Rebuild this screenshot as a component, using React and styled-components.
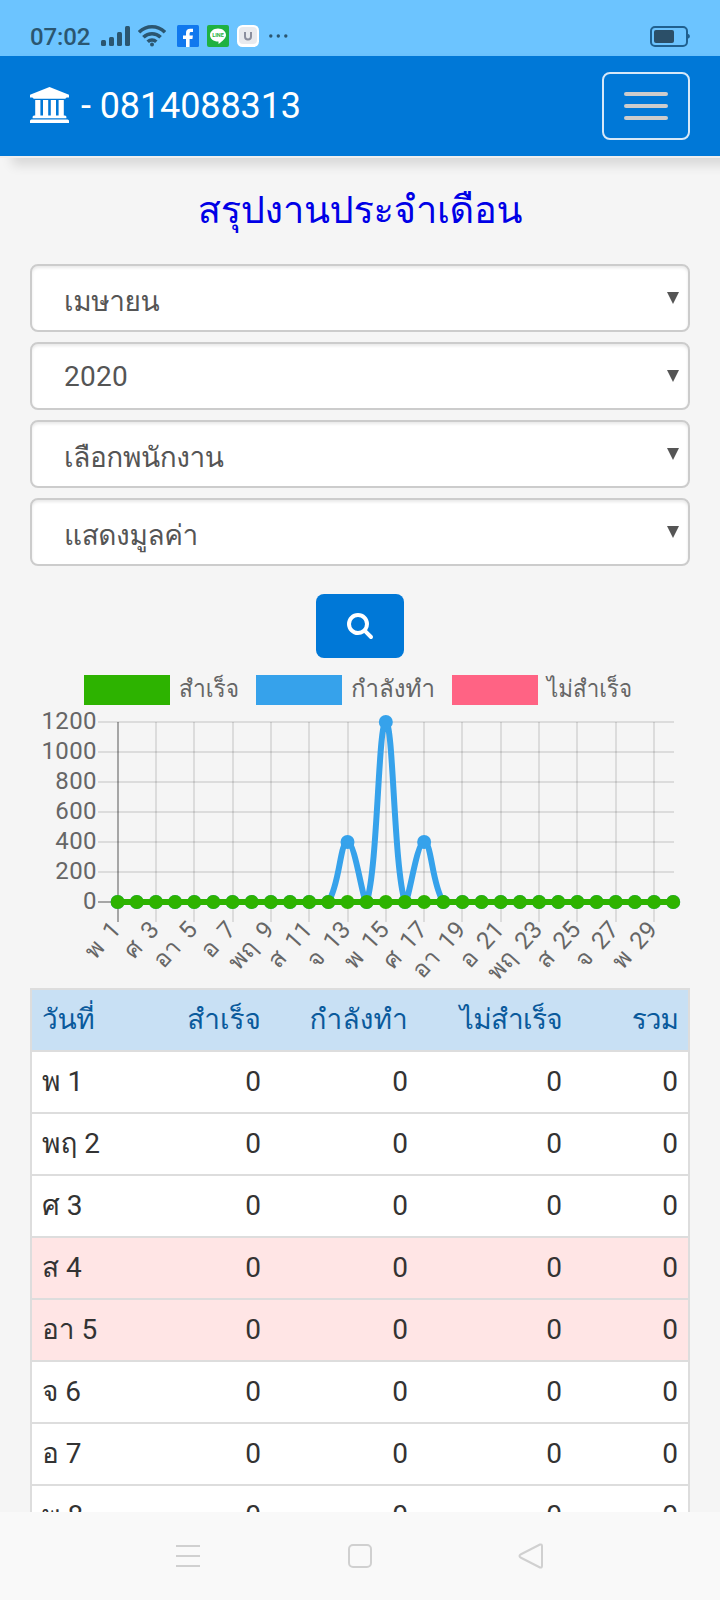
import React from 'react';
import styled, { createGlobalStyle } from 'styled-components';

const GlobalStyle = createGlobalStyle`
  * {
    box-sizing: border-box;
  }

  body {
    margin: 0;
    background: #f5f5f5;
    font-family: Roboto, Loma, 'Noto Sans Thai Looped', sans-serif;
  }
`;

const Screen = styled.div`
  display: flex;
  flex-direction: column;
  width: 720px;
  height: 1600px;
  overflow: hidden;
  background: #f5f5f5;
`;

const StatusBar = styled.header`
  display: flex;
  align-items: center;
  flex-shrink: 0;
  height: 56px;
  padding: 16px 30px 0;
  background: #6cc4ff;
  color: #2b5670;

  svg {
    display: block;
    flex-shrink: 0;
  }
`;

const Clock = styled.span`
  width: 71px;
  padding-top: 2px;
  font-size: 24px;
  font-weight: 500;
  letter-spacing: -0.1px;
  line-height: 40px;
  white-space: nowrap;
`;

const AppIcons = styled.div`
  display: flex;
  gap: 8px;
  margin: 0 auto 0 11px;
`;

const Navbar = styled.nav`
  display: flex;
  align-items: center;
  justify-content: space-between;
  flex-shrink: 0;
  height: 102px;
  padding: 0 30px;
  border-bottom: 2px solid #efefef;
  background: #0078d7;
  background-clip: padding-box;
  box-shadow: 12px 7px 11px rgba(0, 0, 0, 0.12);
`;

const Brand = styled.div`
  display: flex;
  align-items: center;
  gap: 12px;
  color: #fff;
  font-size: 36px;
  letter-spacing: -0.1px;
  line-height: 40px;
  white-space: nowrap;

  svg {
    margin-bottom: 2px;
  }
`;

const MenuButton = styled.button`
  display: flex;
  flex-direction: column;
  align-items: center;
  justify-content: center;
  gap: 8px;
  width: 88px;
  height: 68px;
  padding: 0;
  border: 2px solid #d6e8f8;
  border-radius: 8px;
  background: transparent;

  span {
    width: 44px;
    height: 4px;
    border-radius: 2px;
    background: #ccc;
  }
`;

const Content = styled.main`
  flex: 1;
  min-height: 0;
  padding: 0 30px;
  overflow: hidden;
`;

const Title = styled.h1`
  height: 106px;
  margin: 0;
  padding-top: 25px;
  color: #0000e6;
  font-size: 38px;
  font-weight: 400;
  letter-spacing: -0.3px;
  line-height: 54px;
  text-align: center;
`;

const Filters = styled.div`
  display: flex;
  flex-direction: column;
  gap: 10px;
`;

const Select = styled.div`
  display: flex;
  align-items: center;
  justify-content: space-between;
  height: 68px;
  padding: 0 9px 0 32px;
  border: 2px solid #ccc;
  border-radius: 8px;
  background: #fff;
  box-shadow: inset 0 2px 3px rgba(0, 0, 0, 0.09);
  color: #555;
  font-size: 28px;
  line-height: 40px;
`;

const SelectValue = styled.span`
  padding-top: ${(props) => (props.$thai ? '8px' : '1px')};
  letter-spacing: ${(props) => (props.$thai ? '-0.4px' : '0.3px')};
`;

const SearchButton = styled.button`
  display: flex;
  align-items: center;
  justify-content: center;
  width: 88px;
  height: 64px;
  margin: 28px auto 0;
  padding: 0;
  border: 0;
  border-radius: 8px;
  background: #0078d7;
  color: #fff;
`;

const ChartSvg = styled.svg`
  display: block;
  width: 660px;
  height: 330px;
  overflow: visible;
`;

const ChartText = styled.text`
  fill: #666;
  font-size: 24px;
  letter-spacing: ${(props) => props.$tracking || 0};
  word-spacing: ${(props) => props.$gap || 0};
`;

const Table = styled.table`
  width: 660px;
  border: 2px solid #ddd;
  border-collapse: collapse;
  table-layout: fixed;
  background: #fff;
  color: #333;
  font-size: 28px;
  line-height: 40px;
`;

const HeadRow = styled.tr`
  height: 62px;
  background: #c8e0f4;
  color: #0a5a9c;
`;

const Row = styled.tr`
  height: 62px;
  background: ${(props) => (props.$holiday ? '#ffe5e5' : '#fff')};
`;

const Cell = styled.td`
  padding: 0 10px;
  border-bottom: 2px solid #ddd;
  font-weight: 400;
  text-align: ${(props) => (props.$number ? 'right' : 'left')};
  white-space: nowrap;
`;

const HeadCell = styled(Cell)`
  letter-spacing: ${(props) => props.$tracking};
`;

const SystemBar = styled.footer`
  display: flex;
  align-items: center;
  justify-content: space-between;
  flex-shrink: 0;
  height: 88px;
  padding: 0 175px;
  background: #f9f9f9;
`;

const filters = ['เมษายน', '2020', 'เลือกพนักงาน', 'แสดงมูลค่า'];

const series = [
  { label: 'สำเร็จ', color: '#2db300', x: 84, textWidth: 60 },
  { label: 'กำลังทำ', color: '#36a2eb', x: 256, textWidth: 84 },
  { label: 'ไม่สำเร็จ', color: '#ff6384', x: 452, textWidth: 85 },
];

const columns = [
  { label: 'วันที่', width: 92, tracking: '-0.3px' },
  { label: 'สำเร็จ', width: 148, tracking: '0' },
  { label: 'กำลังทำ', width: 147, tracking: '0.2px' },
  { label: 'ไม่สำเร็จ', width: 154, tracking: '-0.7px' },
  { label: 'รวม', width: 117, tracking: '-1px' },
];

const dayNames = ['พ', 'พฤ', 'ศ', 'ส', 'อา', 'จ', 'อ'];
const days = Array.from({ length: 30 }, (_, i) => `${dayNames[i % 7]} ${i + 1}`);
const inProgress = days.map((_, i) => ({ 12: 400, 14: 1200, 16: 400 }[i] || 0));

const LEFT = 87.6;
const TOP = 64;
const BOTTOM = 244;
const STEP = 555.6 / 29;

const px = (i) => LEFT + i * STEP;
const py = (value) => BOTTOM - (value / 1200) * (BOTTOM - TOP);
const clampY = (y) => Math.max(TOP, Math.min(BOTTOM, y));

// Smooth line with tension 0.4, handles kept inside the plot area
const splinePath = (values) => {
  const points = values.map((v, i) => ({ x: px(i), y: py(v) }));
  const handles = points.map((p, i) => {
    const prev = points[i - 1] || p;
    const next = points[i + 1] || p;
    const before = Math.hypot(p.x - prev.x, p.y - prev.y);
    const after = Math.hypot(next.x - p.x, next.y - p.y);
    const a = (0.4 * before) / (before + after);
    const b = (0.4 * after) / (before + after);
    return {
      inX: p.x - a * (next.x - prev.x),
      inY: clampY(p.y - a * (next.y - prev.y)),
      outX: p.x + b * (next.x - prev.x),
      outY: clampY(p.y + b * (next.y - prev.y)),
    };
  });
  return points
    .map((p, i) => {
      if (i === 0) return `M${p.x} ${p.y}`;
      const from = handles[i - 1];
      const to = handles[i];
      return `C${from.outX} ${from.outY} ${to.inX} ${to.inY} ${p.x} ${p.y}`;
    })
    .join(' ');
};

const BankIcon = () => (
  <svg width="39" height="36.4" viewBox="0 0 1920 1792" fill="currentColor">
    <path d="M960 0l960 384v128h-128q0 26-20.5 45t-48.5 19h-1526q-28 0-48.5-19t-20.5-45h-128v-128zM256 640h256v768h128v-768h256v768h128v-768h256v768h128v-768h256v768h59q28 0 48.5 19t20.5 45v64h-1664v-64q0-26 20.5-45t48.5-19h59v-768zM1851 1600q28 0 48.5 19t20.5 45v128h-1920v-128q0-26 20.5-45t48.5-19h1782z" />
  </svg>
);

const SearchIcon = () => (
  <svg width="28" height="28" viewBox="0 64 1792 1792" fill="currentColor">
    <path d="M1216 832q0-185-131.5-316.5t-316.5-131.5-316.5 131.5-131.5 316.5 131.5 316.5 316.5 131.5 316.5-131.5 131.5-316.5zm512 832q0 52-38 90t-90 38q-54 0-90-38l-343-342q-179 124-399 124-143 0-273.5-55.5t-225-150-150-225-55.5-273.5 55.5-273.5 150-225 225-150 273.5-55.5 273.5 55.5 225 150 150 225 55.5 273.5q0 220-124 399l343 343q37 37 37 90z" />
  </svg>
);

const SignalIcon = () => (
  <svg width="29" height="20" viewBox="0 0 29 20" fill="currentColor">
    <rect x="0" y="14" width="5" height="6" rx="1.5" />
    <rect x="8" y="11" width="5" height="9" rx="1.5" />
    <rect x="16" y="6" width="5" height="14" rx="1.5" />
    <rect x="24" y="0" width="5" height="20" rx="1.5" />
  </svg>
);

const Wifi = styled.svg`
  margin-left: 8px;
`;

const WifiIcon = () => (
  <Wifi width="28" height="22" viewBox="0 0 28 22" fill="none" stroke="currentColor" strokeWidth="3.6">
    <path d="M1 7.2C8.5 0 19.5 0 27 7.2" />
    <path d="M5.4 12.3c5-4.8 12.2-4.8 17.2 0" />
    <path d="M9.7 16.8c2.6-2.4 6-2.4 8.6 0" />
    <circle cx="14" cy="19.6" r="2" fill="currentColor" stroke="none" />
  </Wifi>
);

const FacebookIcon = () => (
  <svg width="22" height="22" viewBox="0 0 22 22">
    <rect width="22" height="22" rx="1.5" fill="#1078ee" />
    <path d="M9 22v-8H6v-3.5h3V8c0-3 1.6-4.3 4.2-4.3H16v3.2h-1.7c-1.3 0-1.7.6-1.7 1.6v2h3.3l-.5 3.5h-2.8v8z" fill="#fff" />
  </svg>
);

const LineIcon = () => (
  <svg width="22" height="22" viewBox="0 0 22 22">
    <rect width="22" height="22" rx="2" fill="#1fb141" />
    <path d="M11 3.5c4.6 0 8 2.9 8 6.6 0 3.2-3.4 6-7.5 9v-2.5C6.5 16.7 3 13.9 3 10.1 3 6.4 6.5 3.5 11 3.5z" fill="#fff" />
    <text x="11" y="12.3" fill="#1fb141" fontSize="5.5" fontWeight="700" textAnchor="middle">LINE</text>
  </svg>
);

const UIcon = () => (
  <svg width="22" height="22" viewBox="0 0 22 22">
    <rect width="22" height="22" rx="5.5" fill="#fff" />
    <rect x="2" y="2" width="18" height="17" rx="4" fill="#e8eaee" />
    <path d="M8 7v4.5c0 4 6 4 6 0V7" fill="none" stroke="#8b8f9e" strokeWidth="2" />
  </svg>
);

const Dots = styled.svg`
  margin-left: 2px;
`;

const DotsIcon = () => (
  <Dots width="19" height="22" viewBox="0 0 19 22" fill="currentColor">
    <circle cx="1.8" cy="11" r="1.7" />
    <circle cx="9.3" cy="11" r="1.7" />
    <circle cx="16.8" cy="11" r="1.7" />
  </Dots>
);

const BatteryIcon = () => (
  <svg width="40" height="21" viewBox="0 0 40 21">
    <rect x="1" y="1" width="36" height="19" rx="4" fill="none" stroke="#20608f" strokeWidth="2" />
    <rect x="4" y="4" width="20" height="13" rx="2" fill="#2b4f68" />
    <path d="M38 8c2.5.5 2.5 4 0 4.5z" fill="#20608f" />
  </svg>
);

const Arrow = () => (
  <svg width="12" height="12" viewBox="0 0 12 12" fill="#555">
    <path d="M0 0h12L6 12z" />
  </svg>
);

const Chart = () => (
  <ChartSvg viewBox="0 0 660 330">
    {series.map((s) => (
      <g key={s.label}>
        <rect x={s.x - 30} y="17" width="86" height="30" fill={s.color} />
        <ChartText x={s.x + 65} y="39" textLength={s.textWidth} lengthAdjust="spacingAndGlyphs">
          {s.label}
        </ChartText>
      </g>
    ))}

    <g fill="none" stroke="rgba(0, 0, 0, 0.1)" strokeWidth="2">
      {[200, 400, 600, 800, 1000, 1200].map((v) => (
        <path key={v} d={`M68 ${py(v)}H644`} />
      ))}
      {days.map((day, i) => (i % 2 === 0 && i > 0 ? <path key={day} d={`M${Math.round(px(i))} ${TOP}V264`} /> : null))}
      <path d="M68 244H644M88 64V264" stroke="rgba(0, 0, 0, 0.32)" />
    </g>

    {[0, 200, 400, 600, 800, 1000, 1200].map((v) => (
      <ChartText key={v} x="67" y={py(v) + 7} textAnchor="end" $tracking="0.4px">{v}</ChartText>
    ))}

    {days.map((day, i) => (i % 2 === 0 ? (
      <ChartText
        key={day}
        transform={`translate(${px(i)} 267) rotate(-48)`}
        x="-1"
        y="7"
        textAnchor="end"
        $tracking="0.2px"
        $gap="4.5px"
      >
        {day}
      </ChartText>
    ) : null))}

    <path d={splinePath(inProgress)} fill="none" stroke="#36a2eb" strokeWidth="6" strokeLinejoin="round" />
    {inProgress.map((v, i) => (
      <circle key={days[i]} cx={px(i)} cy={py(v)} r="7" fill="#36a2eb" />
    ))}
    <path d="M88 244H643" stroke="#2db300" strokeWidth="6" />
    {days.map((day, i) => (
      <circle key={day} cx={px(i)} cy={BOTTOM} r="7" fill="#2db300" />
    ))}
  </ChartSvg>
);

const App = () => (
  <>
    <GlobalStyle />
    <Screen>
      <StatusBar>
        <Clock>07:02</Clock>
        <SignalIcon />
        <WifiIcon />
        <AppIcons>
          <FacebookIcon />
          <LineIcon />
          <UIcon />
          <DotsIcon />
        </AppIcons>
        <BatteryIcon />
      </StatusBar>

      <Navbar>
        <Brand>
          <BankIcon />
          <span>- 0814088313</span>
        </Brand>
        <MenuButton aria-label="menu">
          <span />
          <span />
          <span />
        </MenuButton>
      </Navbar>

      <Content>
        <Title>สรุปงานประจำเดือน</Title>
        <Filters>
          {filters.map((label) => (
            <Select key={label}>
              <SelectValue $thai={label !== '2020'}>{label}</SelectValue>
              <Arrow />
            </Select>
          ))}
        </Filters>
        <SearchButton aria-label="search">
          <SearchIcon />
        </SearchButton>
        <Chart />
        <Table>
          <colgroup>
            {columns.map((c) => (
              <col key={c.label} width={c.width} />
            ))}
          </colgroup>
          <thead>
            <HeadRow>
              {columns.map((c, i) => (
                <HeadCell as="th" key={c.label} $number={i > 0} $tracking={c.tracking}>{c.label}</HeadCell>
              ))}
            </HeadRow>
          </thead>
          <tbody>
            {days.slice(0, 8).map((day, i) => (
              <Row key={day} $holiday={i === 3 || i === 4}>
                <Cell>{day}</Cell>
                <Cell $number>0</Cell>
                <Cell $number>0</Cell>
                <Cell $number>0</Cell>
                <Cell $number>0</Cell>
              </Row>
            ))}
          </tbody>
        </Table>
      </Content>

      <SystemBar>
        <svg width="26" height="26" viewBox="0 0 26 26" stroke="#d0d0d0" strokeWidth="2">
          <path d="M1 3h24M1 13h24M1 23h24" />
        </svg>
        <svg width="26" height="26" viewBox="-1 0 26 26" fill="none" stroke="#d0d0d0" strokeWidth="2">
          <rect x="2" y="2" width="22" height="22" rx="4" />
        </svg>
        <svg width="28" height="28" viewBox="0 0 28 28" fill="none" stroke="#d0d0d0" strokeWidth="2" strokeLinejoin="round">
          <path d="M23 2.5L3.5 12.5q-2 1.5 0 3L23 25.500q2 .5 2-1.500V4q0-2-2-1.500z" />
        </svg>
      </SystemBar>
    </Screen>
  </>
);

export default App;
